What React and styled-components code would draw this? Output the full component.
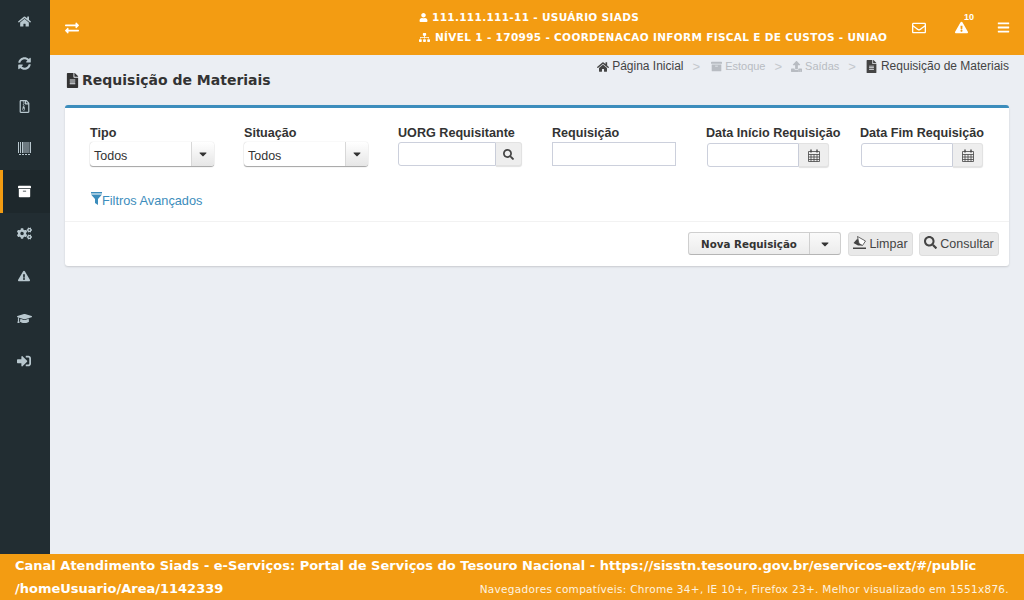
import styled, { createGlobalStyle } from "styled-components";
import {
  FaHome,
  FaSyncAlt,
  FaRegFileArchive,
  FaArchive,
  FaCogs,
  FaExclamationTriangle,
  FaGraduationCap,
  FaSignInAlt,
  FaExchangeAlt,
  FaUser,
  FaSitemap,
  FaRegEnvelope,
  FaBars,
  FaFileAlt,
  FaSearch,
  FaCaretDown,
  FaUpload,
} from "react-icons/fa";

const orange = "#f39c12";
const formFont = `"Liberation Sans", Arial, sans-serif`;
const titleFont = `"DejaVu Sans", Verdana, sans-serif`;

const GlobalStyle = createGlobalStyle`
  html, body {
    margin: 0;
    padding: 0;
    height: 100%;
    overflow: hidden;
  }
  * {
    box-sizing: border-box;
  }
`;

const Page = styled.div`
  width: 1024px;
  height: 600px;
  display: grid;
  grid-template-columns: 1024px;
  grid-template-rows: 554px 46px;
  background-color: #ebeef3;
  font-family: ${formFont};
`;

const Top = styled.div`
  display: flex;
  min-height: 0;
`;

const Sidebar = styled.nav`
  width: 50px;
  flex-shrink: 0;
  background-color: #222d32;
`;

const SideItem = styled.div`
  height: 42.5px;
  display: flex;
  align-items: center;
  justify-content: center;
  color: ${({ $active }) => ($active ? "#ffffff" : "#b8c7ce")};
  background-color: ${({ $active }) => ($active ? "#1e282c" : "transparent")};
  border-left: 3px solid ${({ $active }) => ($active ? orange : "transparent")};
  padding-right: 5px;
`;

const Main = styled.div`
  flex: 1;
  min-width: 0;
  display: flex;
  flex-direction: column;
`;

const Header = styled.header`
  height: 55px;
  background-color: ${orange};
  display: flex;
  align-items: center;
  color: #ffffff;
  font-family: ${titleFont};
`;

const Toggle = styled.div`
  width: 369px;
  flex-shrink: 0;
  padding-left: 15px;
  display: flex;
  font-size: 14px;
`;

const UserInfo = styled.div`
  width: 479px;
  flex-shrink: 0;
  font-size: 10.5px;
  font-weight: 700;
  letter-spacing: 0.33px;
  line-height: 20px;
  white-space: nowrap;
  margin-top: -1px;
`;

const UserLine = styled.div`
  display: flex;
  align-items: center;
  gap: ${({ $gap }) => $gap}px;
`;

const HeaderIcon = styled.div`
  position: relative;
  width: 42px;
  flex-shrink: 0;
  display: flex;
  justify-content: center;
`;

const Badge = styled.span`
  position: absolute;
  top: -9px;
  left: 24px;
  font-size: 9px;
  font-weight: 700;
  font-family: ${formFont};
`;

const Content = styled.main`
  flex: 1;
  padding: 0 15px;
  color: #333333;
`;

const TitleRow = styled.div`
  height: 50px;
  display: flex;
  justify-content: space-between;
  align-items: flex-start;
`;

const PageTitle = styled.h1`
  margin: 16px 0 0;
  font-family: ${titleFont};
  font-size: 14px;
  font-weight: 700;
  line-height: 18px;
  display: flex;
  align-items: center;
  gap: 2px;
`;

const Breadcrumb = styled.div`
  margin-top: 4px;
  display: flex;
  align-items: center;
  font-size: 12px;
  line-height: 15px;
`;

const Crumb = styled.span`
  display: flex;
  align-items: center;
  gap: 3px;
  font-size: ${({ $muted }) => ($muted ? "11px" : "12px")};
  color: ${({ $muted }) => ($muted ? "#b8bcc2" : "#444444")};
`;

const CrumbSep = styled.span`
  color: #c4c8cd;
  font-size: 13px;
  padding: 0 ${({ $wide }) => ($wide ? 11 : 9)}px 0 9px;
`;

const Card = styled.section`
  height: 161px;
  background-color: #ffffff;
  border-top: 3px solid #3c8dbc;
  border-radius: 3px;
  box-shadow: 0 1px 2px rgba(0, 0, 0, 0.15);
  display: flex;
  flex-direction: column;
`;

const Filters = styled.div`
  height: 114px;
  padding: 18px 0 0 25px;
  border-bottom: 1px solid #f2f2f2;
`;

const FieldGrid = styled.div`
  display: grid;
  grid-template-columns: repeat(5, 154px) 1fr;
`;

const Field = styled.div`
  display: flex;
  flex-direction: column;
  align-items: flex-start;
`;

const Label = styled.label`
  font-size: 12.6px;
  font-weight: 700;
  line-height: 15px;
  height: 16px;
  white-space: nowrap;
  color: #333333;
`;

const SelectBox = styled.div`
  width: 124px;
  height: 24px;
  display: flex;
  border-radius: 3px;
  box-shadow: 0 1px 1px rgba(0, 0, 0, 0.35), 0 0 1px rgba(0, 0, 0, 0.25);
  background-color: #ffffff;
`;

const SelectText = styled.span`
  flex: 1;
  padding: 6px 0 0 4px;
  font-size: 12.5px;
  line-height: 17px;
  color: #333333;
`;

const SelectArrow = styled.span`
  width: 23px;
  display: flex;
  align-items: center;
  justify-content: center;
  font-size: 12px;
  color: #333333;
  border-left: 1px solid #d8d8d8;
  border-radius: 0 3px 3px 0;
  background: linear-gradient(#ffffff, #e6e6e6);
`;

const InputGroup = styled.div`
  width: ${({ $width }) => $width}px;
  height: 24px;
  margin-top: ${({ $offset }) => $offset || 0}px;
  margin-left: ${({ $offset }) => $offset || 0}px;
  display: flex;
`;

const TextInput = styled.div`
  flex: 1;
  border: 1px solid #ccd0dc;
  border-radius: ${({ $grouped }) => ($grouped ? "3px 0 0 3px" : "0")};
`;

const Addon = styled.span`
  width: ${({ $width }) => $width}px;
  display: flex;
  align-items: center;
  justify-content: center;
  color: #444444;
  border: 1px solid #e2e2e2;
  border-left: 0;
  border-radius: 0 3px 3px 0;
  background-color: #eeeeee;
  box-shadow: 0 1px 1px rgba(0, 0, 0, 0.12);
`;

const FilterLink = styled.a`
  display: flex;
  align-items: center;
  margin-top: 26px;
  font-size: 12.75px;
  line-height: 16px;
  color: #3c8dbc;
  svg {
    margin: -5px 0 0 1px;
  }
`;

const Actions = styled.div`
  flex: 1;
  display: flex;
  justify-content: flex-end;
  gap: 6px;
  padding: 10px 10px 0 0;
`;

const SplitButton = styled.div`
  height: 23px;
  display: flex;
  margin-right: 1px;
  border: 1px solid #cfcfcf;
  border-bottom-color: #b5b5b5;
  border-radius: 3px;
  background: linear-gradient(#fafafa, #ececec);
`;

const SplitMain = styled.span`
  width: 121px;
  display: flex;
  align-items: center;
  justify-content: center;
  font-family: ${titleFont};
  font-size: 10.3px;
  font-weight: 700;
  color: #333333;
  border-right: 1px solid #cfcfcf;
`;

const SplitCaret = styled.span`
  width: 30px;
  display: flex;
  align-items: center;
  justify-content: center;
  font-size: 12px;
  color: #333333;
`;

const Button = styled.span`
  width: ${({ $width }) => $width}px;
  height: 24px;
  display: flex;
  align-items: center;
  justify-content: center;
  gap: 3px;
  font-size: 12.5px;
  color: #444444;
  border: 1px solid #dddddd;
  border-radius: 3px;
  background-color: #e9e9e9;
  svg {
    margin-top: -3px;
  }
`;

const Footer = styled.footer`
  background-color: ${orange};
  color: #ffffff;
  font-family: ${titleFont};
  padding: 0 15px;
  position: relative;
`;

const FooterLink = styled.div`
  font-size: 13px;
  font-weight: 700;
  line-height: 23px;
`;

const FooterNote = styled.div`
  position: absolute;
  right: 15px;
  bottom: 4px;
  font-size: 10.5px;
  line-height: 14px;
  letter-spacing: 0.3px;
  color: #fdf3e0;
`;

// drawn by hand, the package versions of these don't look like the reference
const BarcodeIcon = () => (
  <svg width="13" height="13" viewBox="0 0 13 13" fill="currentColor">
    <path d="M0 0h1v11H0zM2 0h1v11H2zM4 0h1.5v11H4zM6.5 0h1v11h-1zM8.5 0h1v11h-1zM10.5 0h.8v11h-.8zM12 0h1v11h-1zM1 12h2v1H1zM4 12h2v1H4zM7 12h2v1H7zM10 12h2v1h-2z" />
  </svg>
);

const FilterIcon = () => (
  <svg width="11" height="13" viewBox="0 0 11 13" fill="currentColor">
    <path d="M0 0h11v1.5H0zM0 2.5h11L7 7v6L4 11V7z" />
  </svg>
);

const CalendarIcon = () => (
  <svg width="12" height="13" viewBox="0 0 12 13" fill="none" stroke="currentColor">
    <path d="M.5 2.5h11v10H.5zM.5 5.5h11M.5 8h11M.5 10.5h11M3 5.5v7M6 5.5v7M9 5.5v7" strokeWidth="0.8" />
    <path d="M3 .5v3M9 .5v3" strokeWidth="1.4" />
  </svg>
);

const EraserIcon = () => (
  <svg width="13" height="14" viewBox="0 0 13 14" fill="currentColor">
    <path d="M4.5 .5l8 4.5-3 4.5-3.5-2z" fill="#ffffff" stroke="currentColor" strokeWidth="0.8" />
    <path d="M4.5 2.5L6 7.5 9.5 9.5H5L.5 7z" />
    <path d="M0 11.5h13V13H0z" />
  </svg>
);

const sideItems = [
  { Icon: FaHome, size: 13 },
  { Icon: FaSyncAlt, size: 13 },
  { Icon: FaRegFileArchive, size: 13 },
  { Icon: BarcodeIcon },
  { Icon: FaArchive, size: 13, active: true },
  { Icon: FaCogs, size: 15 },
  { Icon: FaExclamationTriangle, size: 12 },
  { Icon: FaGraduationCap, size: 15 },
  { Icon: FaSignInAlt, size: 14 },
];

const App = () => (
  <Page>
    <GlobalStyle />
    <Top>
      <Sidebar>
        {sideItems.map(({ Icon, size, active }, i) => (
          <SideItem key={i} $active={active}>
            <Icon size={size} />
          </SideItem>
        ))}
      </Sidebar>
      <Main>
        <Header>
          <Toggle>
            <FaExchangeAlt />
          </Toggle>
          <UserInfo>
            <UserLine $gap={4}>
              <FaUser size={9} />
              111.111.111-11 - USUÁRIO SIADS
            </UserLine>
            <UserLine $gap={5}>
              <FaSitemap size={11} />
              NÍVEL 1 - 170995 - COORDENACAO INFORM FISCAL E DE CUSTOS - UNIAO
            </UserLine>
          </UserInfo>
          <HeaderIcon>
            <FaRegEnvelope size={14} />
          </HeaderIcon>
          <HeaderIcon>
            <FaExclamationTriangle size={13} />
            <Badge>10</Badge>
          </HeaderIcon>
          <HeaderIcon>
            <FaBars size={13} />
          </HeaderIcon>
        </Header>
        <Content>
          <TitleRow>
            <PageTitle>
              <FaFileAlt size={15} />
              Requisição de Materiais
            </PageTitle>
            <Breadcrumb>
              <Crumb>
                <FaHome size={12} />
                Página Inicial
              </Crumb>
              <CrumbSep $wide>&gt;</CrumbSep>
              <Crumb $muted>
                <FaArchive size={11} />
                Estoque
              </Crumb>
              <CrumbSep>&gt;</CrumbSep>
              <Crumb $muted>
                <FaUpload size={11} />
                Saídas
              </Crumb>
              <CrumbSep>&gt;</CrumbSep>
              <Crumb>
                <FaFileAlt size={13} />
                Requisição de Materiais
              </Crumb>
            </Breadcrumb>
          </TitleRow>
          <Card>
            <Filters>
              <FieldGrid>
                <Field>
                  <Label>Tipo</Label>
                  <SelectBox>
                    <SelectText>Todos</SelectText>
                    <SelectArrow>
                      <FaCaretDown />
                    </SelectArrow>
                  </SelectBox>
                </Field>
                <Field>
                  <Label>Situação</Label>
                  <SelectBox>
                    <SelectText>Todos</SelectText>
                    <SelectArrow>
                      <FaCaretDown />
                    </SelectArrow>
                  </SelectBox>
                </Field>
                <Field>
                  <Label>UORG Requisitante</Label>
                  <InputGroup $width={124}>
                    <TextInput $grouped />
                    <Addon $width={26}>
                      <FaSearch size={11} />
                    </Addon>
                  </InputGroup>
                </Field>
                <Field>
                  <Label>Requisição</Label>
                  <InputGroup $width={124}>
                    <TextInput />
                  </InputGroup>
                </Field>
                <Field>
                  <Label>Data Início Requisição</Label>
                  <InputGroup $width={122} $offset={1}>
                    <TextInput $grouped />
                    <Addon $width={30}>
                      <CalendarIcon />
                    </Addon>
                  </InputGroup>
                </Field>
                <Field>
                  <Label>Data Fim Requisição</Label>
                  <InputGroup $width={122} $offset={1}>
                    <TextInput $grouped />
                    <Addon $width={30}>
                      <CalendarIcon />
                    </Addon>
                  </InputGroup>
                </Field>
              </FieldGrid>
              <FilterLink>
                <FilterIcon />
                Filtros Avançados
              </FilterLink>
            </Filters>
            <Actions>
              <SplitButton>
                <SplitMain>Nova Requisição</SplitMain>
                <SplitCaret>
                  <FaCaretDown />
                </SplitCaret>
              </SplitButton>
              <Button $width={65}>
                <EraserIcon />
                Limpar
              </Button>
              <Button $width={80}>
                <FaSearch size={13} />
                Consultar
              </Button>
            </Actions>
          </Card>
        </Content>
      </Main>
    </Top>
    <Footer>
      <FooterLink>
        Canal Atendimento Siads - e-Serviços: Portal de Serviços do Tesouro
        Nacional - https://sisstn.tesouro.gov.br/eservicos-ext/#/public
        <br />
        /homeUsuario/Area/1142339
      </FooterLink>
      <FooterNote>
        Navegadores compatíveis: Chrome 34+, IE 10+, Firefox 23+. Melhor
        visualizado em 1551x876.
      </FooterNote>
    </Footer>
  </Page>
);

export default App;
